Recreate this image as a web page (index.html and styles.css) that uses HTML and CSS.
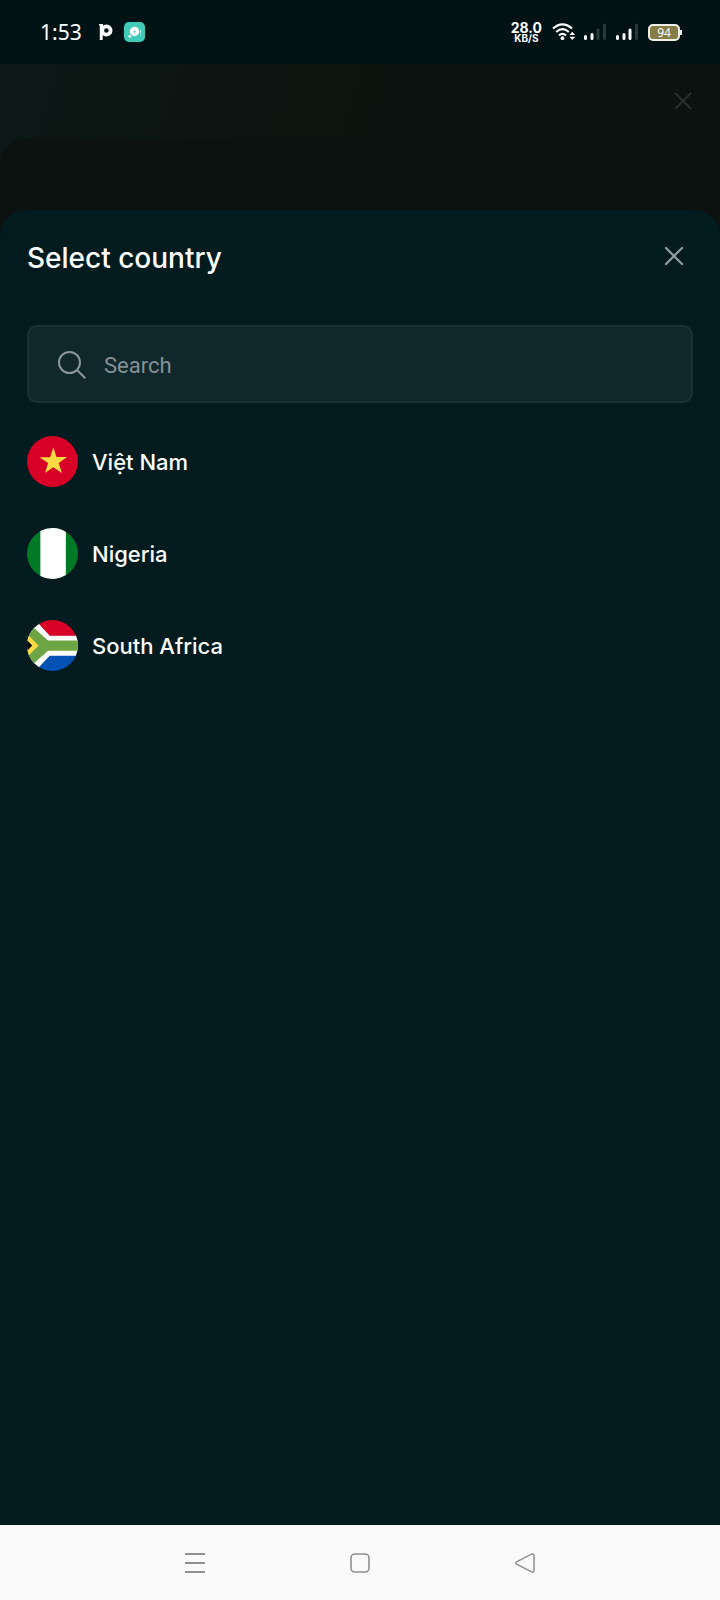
FILE: index.html
```html
<!DOCTYPE html>
<html lang="en">
<head>
<meta charset="utf-8">
<meta name="viewport" content="width=device-width, initial-scale=1">
<title>Select country</title>
<link rel="stylesheet" href="styles.css">
</head>
<body>
<div class="screen">
  <header class="status">
    <div class="status-left">
      <span class="time">1:53</span>
      <svg class="app-p" width="14" height="16" viewBox="0 0 14 16" aria-hidden="true"><path d="M0 0h4v1.500L3.600 16H.8V2.500z" fill="#fff"/><circle cx="7.400" cy="6.500" r="4.200" fill="none" stroke="#fff" stroke-width="3.800"/></svg>
      <svg class="app-chat" width="21" height="20" viewBox="0 0 21 20" aria-hidden="true"><rect width="21" height="20" rx="5" fill="#3fcbb8"/><circle cx="10.500" cy="9.500" r="4.700" fill="#fff"/><path d="M9.300 9h2.600l-1.300 2z" fill="#3fcbb8"/><circle cx="5.800" cy="14.300" r="1.400" fill="#fff"/><path d="M16.500 8v3.500M16.500 12.300v1" stroke="#a9ebe0"/></svg>
    </div>
    <div class="status-right">
      <div class="speed"><span class="speed-value">28.0</span><span class="speed-unit">KB/S</span></div>
      <svg class="wifi" width="22" height="18" viewBox="0 0 22 18" aria-hidden="true"><g fill="none" stroke="#fff" stroke-width="2.200"><path d="M1 5.500Q10.500-2.700 20 5.500"/><path d="M4.200 9Q10.500 3.400 16.800 9"/><path d="M7 12.300q3.500-3 7 0"/></g><circle cx="10.500" cy="15.200" r="1.900" fill="#fff"/><path d="M17.500 12l2.800-3.200 2.800 3.200zM17.500 13.800l2.800 3.200 2.800-3.200z" fill="#fff"/></svg>
      <svg class="signal" width="22" height="18" viewBox="0 0 22 18" aria-hidden="true"><g stroke-width="3" stroke-linecap="round"><path d="M1.500 13.500v2M8 11.500v4" stroke="#fff"/><path d="M14 7v8.500M20.500 2v13.500" stroke="#2b3939"/></g></svg>
      <svg class="signal" width="22" height="18" viewBox="0 0 22 18" aria-hidden="true"><g stroke-width="3" stroke-linecap="round"><path d="M1.500 13.500v2M8 11.500v4M14 7v8.500" stroke="#fff"/><path d="M20.500 2v13.500" stroke="#2b3939"/></g></svg>
      <div class="battery"><span class="battery-level">94</span></div>
    </div>
  </header>

  <main class="backdrop">
    <div class="under-bar">
      <svg width="18" height="18" viewBox="0 0 18 18" aria-hidden="true"><path d="M1.500 1.500l15 15M16.500 1.500l-15 15" stroke="#292f2d" stroke-width="2" stroke-linecap="round"/></svg>
    </div>
    <div class="under-panel">
      <section class="sheet" aria-labelledby="sheet-title">
        <div class="sheet-head">
          <h1 class="sheet-title" id="sheet-title">Select country</h1>
          <button class="close" type="button" aria-label="Close">
            <svg width="20" height="20" viewBox="0 0 20 20" aria-hidden="true"><path d="M2 2l16 16M18 2L2 18" stroke="#909ca3" stroke-width="2.200" stroke-linecap="round"/></svg>
          </button>
        </div>
        <label class="search">
          <svg width="28" height="28" viewBox="0 0 28 28" aria-hidden="true"><g fill="none" stroke="#89969c" stroke-width="2"><circle cx="11.500" cy="11.500" r="10.500"/><path d="M19 19l8.300 8.300"/></g></svg>
          <input class="search-input" type="text" placeholder="Search" aria-label="Search">
        </label>
        <ul class="countries">
          <li><button class="country" type="button">
            <svg class="flag" viewBox="0 0 512 512" aria-hidden="true"><circle cx="256" cy="256" r="256" fill="#d80027"/><path d="M264 113l32 98h106l-84 60 34 104-88-62-84 58 32-100-88-58h108z" fill="#ffda44"/></svg>
            <span class="country-name">Việt Nam</span></button></li>
          <li><button class="country" type="button">
            <svg class="flag" viewBox="0 0 512 512" aria-hidden="true"><circle cx="256" cy="256" r="256" fill="#007a25"/><path d="M134 31a256 256 0 0 1 256 8v434a256 256 0 0 1-256 8z" fill="#fff"/></svg>
            <span class="country-name">Nigeria</span></button></li>
          <li><button class="country" type="button">
            <svg class="flag" viewBox="0 0 512 512" aria-hidden="true"><defs><clipPath id="round"><circle cx="256" cy="256" r="256"/></clipPath></defs><g clip-path="url(#round)"><path fill="#fff" d="M0 0h90l145 152h277v210H235L90 512H0z"/><path d="M84 0h428v157H228z" fill="#d80027"/><path d="M84 512h428V358H228z" fill="#0052b4"/><path d="M0 17L211 207h301v101H211L0 498z" fill="#6da544"/><path d="M0 140l117 116L0 372z" fill="#ffda44"/><path d="M0 202l52 54-52 54z" fill="#000"/></g></svg>
            <span class="country-name">South Africa</span></button></li>
        </ul>
      </section>
    </div>
  </main>

  <nav class="system-nav" aria-label="System">
    <button class="nav-button" type="button" aria-label="Recent apps"><svg width="20" height="20" viewBox="0 0 20 20"><path d="M0 1h20M0 10h20M0 19h20" stroke="#8f8f8f" stroke-width="2"/></svg></button>
    <button class="nav-button" type="button" aria-label="Home"><svg width="20" height="20" viewBox="0 0 20 20"><rect x="1" y="1" width="18" height="18" rx="4" fill="none" stroke="#8f8f8f" stroke-width="1.600"/></svg></button>
    <button class="nav-button" type="button" aria-label="Back"><svg width="20" height="20" viewBox="0 0 20 20"><path d="M1.600 8.800L16.500 1.200Q19 .3 19 2.800v14.400q0 2.500-2.500 1.600L1.600 11.200Q-.2 10 1.600 8.800z" fill="none" stroke="#8f8f8f" stroke-width="1.500"/></svg></button>
  </nav>
</div>
</body>
</html>
```
FILE: styles.css
```css
* {
  box-sizing: border-box;
}

body {
  margin: 0;
  background: #011215;
  color: #fff;
  font-family: Inter, "Noto Sans", sans-serif;
}

button {
  padding: 0;
  border: 0;
  background: none;
  color: inherit;
  font: inherit;
  cursor: pointer;
}

svg {
  display: block;
  flex: none;
}

.screen {
  display: flex;
  flex-direction: column;
  min-height: 100vh;
}

.status {
  display: flex;
  align-items: center;
  justify-content: space-between;
  height: 64px;
  padding: 0 40px;
  background: #011215;
}

.status-left,
.status-right {
  display: flex;
  align-items: center;
}

.time {
  margin-right: 17px;
  font-family: "Noto Sans", sans-serif;
  font-size: 21px;
  line-height: 24px;
}

.app-p {
  margin-right: 11px;
}

.status-right {
  gap: 10px;
}

.speed {
  display: flex;
  flex-direction: column;
  align-items: center;
  font-weight: 700;
}

.speed-value {
  font-size: 14px;
  line-height: 12px;
}

.speed-unit {
  font-size: 10px;
  line-height: 9px;
}

.wifi {
  overflow: visible;
}

.battery {
  position: relative;
  display: flex;
  align-items: center;
  justify-content: center;
  width: 32px;
  height: 17px;
  border: 2px solid #f0f0ea;
  border-radius: 5px;
  background: #857c46;
}

.battery::after {
  content: "";
  position: absolute;
  top: 4px;
  right: -4px;
  width: 2px;
  height: 5px;
  background: #f0f0ea;
}

.battery-level {
  font-family: "Noto Sans", sans-serif;
  font-size: 12px;
  line-height: 13px;
}

.backdrop {
  display: flex;
  flex: 1;
  flex-direction: column;
  background: linear-gradient(108deg, #0b1916 0, #0c1613 100px, #0b140f 300px, #0c120f 420px);
}

.under-bar {
  display: flex;
  align-items: center;
  justify-content: flex-end;
  height: 75px;
  padding: 0 28px 2px;
}

.under-panel {
  display: flex;
  flex: 1;
  flex-direction: column;
  padding-top: 71px;
  border-radius: 26px 26px 0 0;
  background: #0c120f;
}

.sheet {
  flex: 1;
  padding: 24px 27px;
  border-radius: 26px 26px 0 0;
  background: #011b1e;
}

.sheet-head {
  display: flex;
  align-items: center;
  justify-content: space-between;
  height: 48px;
  margin-bottom: 43px;
}

.sheet-title {
  margin: 0;
  font-size: 28px;
  font-weight: 500;
  line-height: 36px;
}

.close {
  display: flex;
  align-items: center;
  justify-content: center;
  width: 38px;
  height: 42px;
  padding-bottom: 4px;
}

.search {
  display: flex;
  align-items: center;
  gap: 18px;
  height: 78px;
  padding: 2px 29px 0;
  border: 2px solid #1b3034;
  border-radius: 10px;
  background: #10272b;
}

.search-input {
  flex: 1;
  min-width: 0;
  padding: 2px 0 0;
  border: 0;
  outline: 0;
  background: none;
  color: #fff;
  font-family: Roboto, sans-serif;
  font-size: 22px;
  line-height: 28px;
}

.search-input::placeholder {
  color: #849197;
  opacity: 1;
}

.countries {
  margin: 0;
  padding: 12px 0;
  list-style: none;
}

.country {
  display: flex;
  align-items: center;
  gap: 14px;
  width: 100%;
  height: 92px;
  font-size: 22px;
  font-weight: 500;
  line-height: 28px;
  text-align: left;
}

.country-name {
  padding-top: 2px;
}

.flag {
  width: 51px;
  height: 51px;
}

.system-nav {
  display: flex;
  align-items: center;
  justify-content: center;
  gap: 95px;
  height: 75px;
  background: #fafafa;
}

.nav-button {
  display: flex;
  align-items: center;
  justify-content: center;
  width: 70px;
  height: 48px;
}
```
